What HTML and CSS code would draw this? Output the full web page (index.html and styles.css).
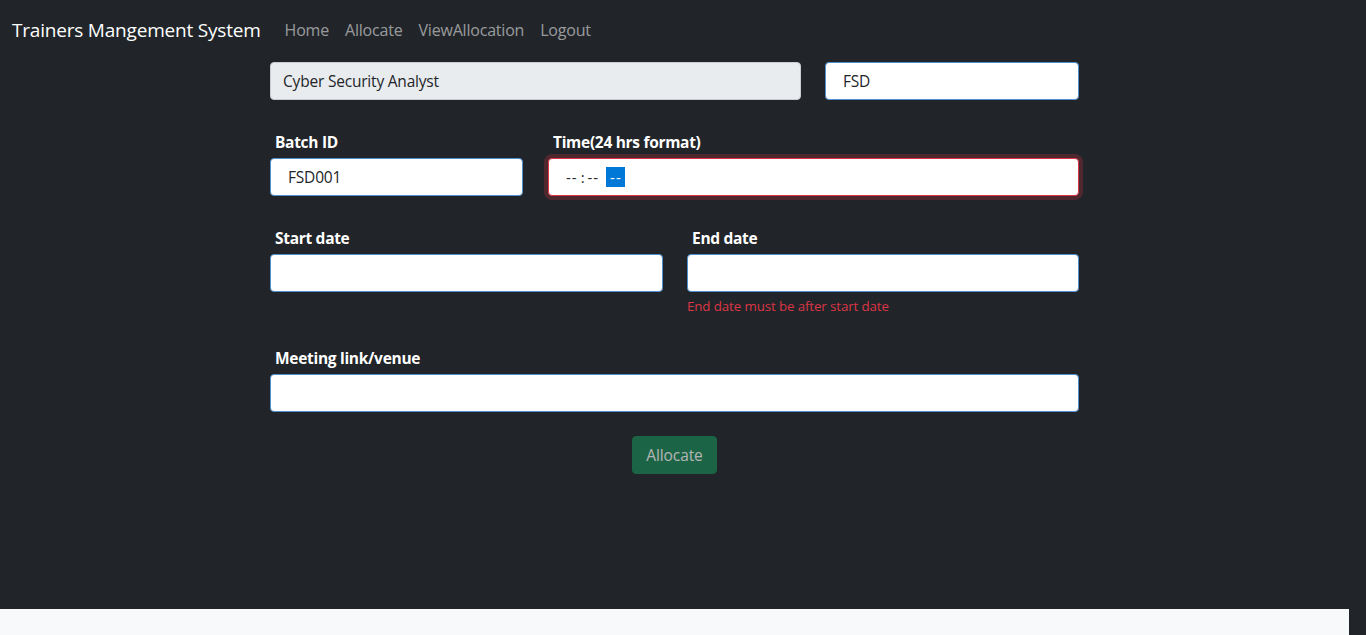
FILE: index.html
```html
<!DOCTYPE html>
<html lang="en">
<head>
<meta charset="utf-8">
<title>Trainers Mangement System</title>
<link rel="stylesheet" href="styles.css">
</head>
<body>
<div class="shell">
  <nav class="navbar">
    <span class="brand">Trainers Mangement System</span>
    <ul class="nav">
      <li><a href="#">Home</a></li>
      <li><a href="#">Allocate</a></li>
      <li><a href="#">ViewAllocation</a></li>
      <li><a href="#">Logout</a></li>
    </ul>
  </nav>
  <main class="main">
    <form class="form">
      <div class="row row-a">
        <div class="field"><input class="control disabled" value="Cyber Security Analyst" disabled></div>
        <div class="field"><input class="control pad-lg" value="FSD"></div>
      </div>
      <div class="row row-b">
        <div class="field">
          <label class="label">Batch ID</label>
          <input class="control pad-lg" value="FSD001">
        </div>
        <div class="field">
          <label class="label">Time(24 hrs format)</label>
          <div class="control time invalid"><span class="seg">--</span><span class="sep">:</span><span class="seg">--</span><span class="seg sel">--</span></div>
        </div>
      </div>
      <div class="row row-c">
        <div class="field">
          <label class="label">Start date</label>
          <input class="control">
        </div>
        <div class="field">
          <label class="label">End date</label>
          <input class="control">
          <div class="error">End date must be after start date</div>
        </div>
      </div>
      <div class="row row-d">
        <div class="field">
          <label class="label">Meeting link/venue</label>
          <input class="control">
        </div>
      </div>
      <div class="actions">
        <button class="btn" type="button" disabled>Allocate</button>
      </div>
    </form>
  </main>
  <footer class="footer"></footer>
</div>
</body>
</html>
```
FILE: styles.css
```css
* { box-sizing: border-box; }
html, body { margin: 0; height: 100%; }
body {
  background: #212529;
  font-family: "Open Sans", "Noto Sans", "Liberation Sans", sans-serif;
  color: #fff;
  overflow: hidden;
}
.shell {
  width: calc(100% - 17px);
  height: 635px;
  display: flex;
  flex-direction: column;
}
.navbar {
  height: 56px;
  padding: 4px 12px 0;
  display: flex;
  align-items: center;
  flex: none;
}
.brand {
  font-size: 19px;
  color: #fff;
  margin-right: 16px;
  letter-spacing: -0.2px;
}
.nav {
  list-style: none;
  margin: 0;
  padding: 0;
  display: flex;
}
.nav a {
  display: block;
  padding: 8px;
  font-size: 16px;
  color: rgba(255,255,255,.55);
  text-decoration: none;
  letter-spacing: -0.2px;
}
.main { flex: 1; }
.form {
  width: 809px;
  margin: 6px auto 0;
}
.row {
  display: grid;
  column-gap: 24px;
  margin-bottom: 34px;
}
.row-a { grid-template-columns: 531px 254px; }
.row-b { grid-template-columns: 253px 531px; column-gap: 25px; }
.row-c { grid-template-columns: 393px 392px; }
.row-d { grid-template-columns: 1fr; margin-bottom: 24px; }
.field { display: flex; flex-direction: column; }
.label {
  display: block;
  height: 24px;
  line-height: 16px;
  padding: 0 0 8px 5px;
  font-size: 15.5px;
  font-weight: 700;
  color: #fff;
  letter-spacing: -0.3px;
}
.control {
  display: block;
  width: 100%;
  height: 38px;
  padding: 0 12px;
  border: 1px solid #4f8fd0;
  border-radius: 4px;
  background: #fff;
  color: #212529;
  font-family: inherit;
  font-size: 15.5px;
  letter-spacing: -0.2px;
  outline: none;
}
.control.pad-lg { padding-left: 17px; }
.control.disabled {
  background: #e9ecef;
  border-color: #c9ccd0;
  color: #212529;
  opacity: 1;
}
.time {
  display: flex;
  align-items: center;
  padding-left: 16px;
  font-size: 15px;
}
.time.invalid {
  border-color: #dc3545;
  box-shadow: 0 0 0 4px rgba(220,53,69,.25);
}
.seg { padding: 0 1px; letter-spacing: 1px; }
.sep { padding: 0 2px; }
.seg.sel {
  margin-left: 6px;
  background: #0078d7;
  color: #fff;
  height: 20px;
  line-height: 20px;
  padding: 0 3px 0 4px;
}
.error {
  margin-top: 4px;
  height: 20px;
  line-height: 20px;
  font-size: 13.3px;
  color: #dc3545;
  letter-spacing: -0.1px;
}
.actions { display: flex; justify-content: center; }
.btn {
  height: 38px;
  padding: 0 13px;
  border: 1px solid #198754;
  border-radius: 4px;
  background: #198754;
  color: #fff;
  font-family: inherit;
  font-size: 15.5px;
  opacity: .65;
  letter-spacing: -0.1px;
}
.footer {
  height: 26px;
  background: #f8f9fa;
  flex: none;
}
```
